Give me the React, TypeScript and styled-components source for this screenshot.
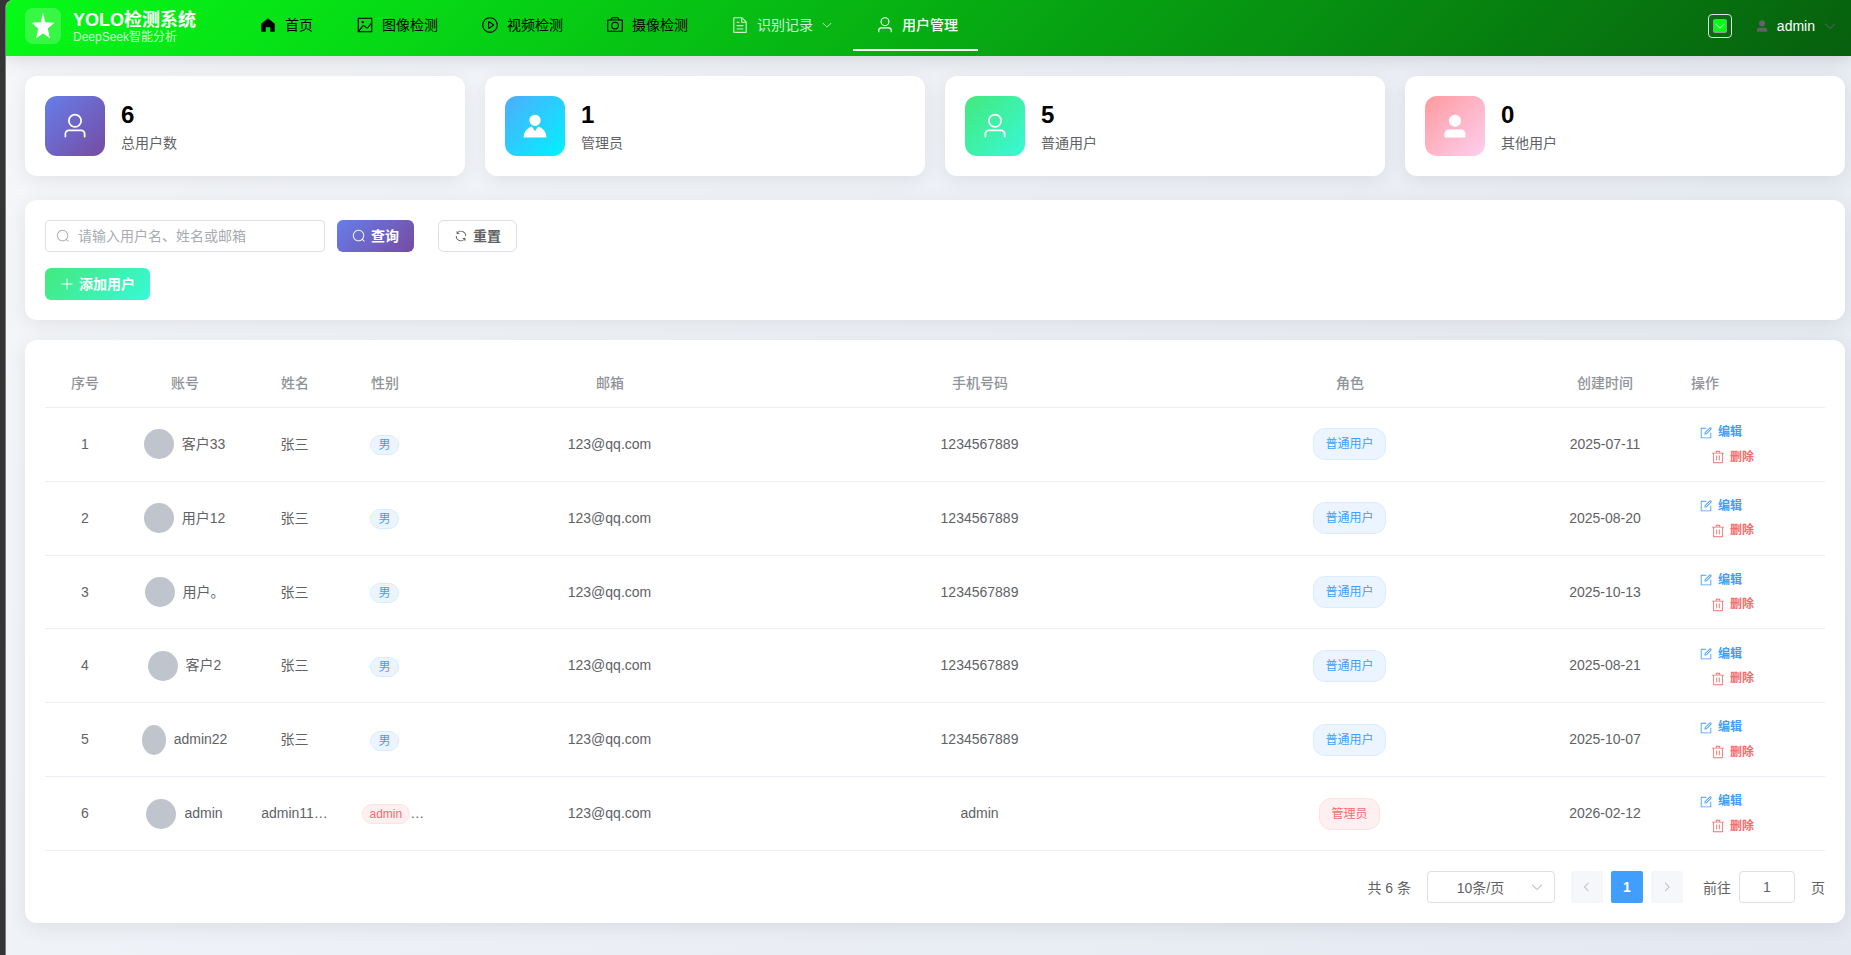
import React from "react";
import styled, { createGlobalStyle, css } from "styled-components";

const Global = createGlobalStyle`
  * { box-sizing: border-box; }
  body {
    margin: 0;
    background: #353535;
    font-family: "Liberation Sans", "Noto Sans CJK SC", sans-serif;
    font-size: 14px;
    color: #606266;
    overflow: hidden;
  }
`;

const paths = {
  user: "M512 512a192 192 0 1 0 0-384 192 192 0 0 0 0 384m0 64a256 256 0 1 1 0-512 256 256 0 0 1 0 512m320 320v-96a96 96 0 0 0-96-96H288a96 96 0 0 0-96 96v96a32 32 0 1 1-64 0v-96a160 160 0 0 1 160-160h448a160 160 0 0 1 160 160v96a32 32 0 1 1-64 0",
  userFilled:
    "M288 320a224 224 0 1 0 448 0 224 224 0 1 0-448 0m544 608H160a32 32 0 0 1-32-32v-96a160 160 0 0 1 160-160h448a160 160 0 0 1 160 160v96a32 32 0 0 1-32 32z",
  avatar:
    "M628.736 528.896A416 416 0 0 1 928 928H96a415.872 415.872 0 0 1 299.264-399.104L512 704zM720 304a208 208 0 1 1-416 0 208 208 0 0 1 416 0",
  home: "M512 128 128 447.936V896h255.936V640H640v256h255.936V447.936z",
  picture:
    "M160 160v704h704V160zm-32-64h768a32 32 0 0 1 32 32v768a32 32 0 0 1-32 32H128a32 32 0 0 1-32-32V128a32 32 0 0 1 32-32M384 288q64 0 64 64t-64 64q-64 0-64-64t64-64M185.408 876.992l-50.816-38.912L350.72 556.032a96 96 0 0 1 134.592-17.856l1.856 1.472 122.88 99.136a32 32 0 0 0 44.992-4.864l216-269.888 49.92 39.936-215.808 269.824-.256.32a96 96 0 0 1-135.04 14.464l-122.88-99.072-.64-.512a32 32 0 0 0-44.8 5.952z",
  video:
    "M512 64a448 448 0 1 1 0 896 448 448 0 0 1 0-896m0 832a384 384 0 0 0 0-768 384 384 0 0 0 0 768m-48-247.616L668.608 512 464 375.616zm10.624-342.656 249.472 166.336a48 48 0 0 1 0 79.872L474.624 718.272A48 48 0 0 1 400 678.336V345.6a48 48 0 0 1 74.624-39.936z",
  camera:
    "M896 256H128v576h768zm-199.424-64-32.064-64h-304.96l-32 64zM96 192h160l46.336-92.608A64 64 0 0 1 359.552 64h304.96a64 64 0 0 1 57.216 35.328L768.192 192H928a32 32 0 0 1 32 32v640a32 32 0 0 1-32 32H96a32 32 0 0 1-32-32V224a32 32 0 0 1 32-32m416 512a160 160 0 1 0 0-320 160 160 0 0 0 0 320m0 64a224 224 0 1 1 0-448 224 224 0 0 1 0 448",
  document:
    "M832 384H576V128H192v768h640zm-26.496-64L640 154.496V320zM160 64h480l256 256v608a32 32 0 0 1-32 32H160a32 32 0 0 1-32-32V96a32 32 0 0 1 32-32m160 448h384v64H320zm0-192h160v64H320zm0 384h384v64H320z",
  down: "M831.872 340.864 512 652.672 192.128 340.864a30.592 30.592 0 0 0-42.752 0 29.12 29.12 0 0 0 0 41.6L489.664 714.24a32 32 0 0 0 44.672 0l340.288-331.712a29.12 29.12 0 0 0 0-41.728 30.592 30.592 0 0 0-42.752 0z",
  left: "M609.408 149.376 277.76 489.6a32 32 0 0 0 0 44.672l331.648 340.352a29.12 29.12 0 0 0 41.728 0 30.592 30.592 0 0 0 0-42.752L339.264 511.936l311.872-319.872a30.592 30.592 0 0 0 0-42.688 29.12 29.12 0 0 0-41.728 0",
  right:
    "M340.864 149.312a30.592 30.592 0 0 0 0 42.752L652.736 512 340.864 831.872a30.592 30.592 0 0 0 0 42.752 29.12 29.12 0 0 0 41.728 0L714.24 534.336a32 32 0 0 0 0-44.672L382.592 149.376a29.12 29.12 0 0 0-41.728 0z",
  search:
    "m795.904 750.72 124.992 124.928a32 32 0 0 1-45.248 45.248L750.656 795.904a416 416 0 1 1 45.248-45.248M480 832a352 352 0 1 0 0-704 352 352 0 0 0 0 704",
  refresh:
    "M771.776 794.88A384 384 0 0 1 128 512h64a320 320 0 0 0 555.712 216.448H654.72a32 32 0 1 1 0-64h149.056a32 32 0 0 1 32 32v148.928a32 32 0 1 1-64 0v-50.56zM276.288 295.616h92.992a32 32 0 0 1 0 64H220.16a32 32 0 0 1-32-32V178.56a32 32 0 0 1 64 0v50.56A384 384 0 0 1 896.128 512h-64a320 320 0 0 0-555.776-216.384z",
  plus: "M480 480V128a32 32 0 0 1 64 0v352h352a32 32 0 1 1 0 64H544v352a32 32 0 1 1-64 0V544H128a32 32 0 0 1 0-64z",
  edit: "M832 512a32 32 0 1 1 64 0v352a32 32 0 0 1-32 32H160a32 32 0 0 1-32-32V160a32 32 0 0 1 32-32h352a32 32 0 0 1 0 64H192v640h640zM469.952 554.24l52.8-7.552L847.104 222.4a32 32 0 1 0-45.248-45.248L477.44 501.44l-7.552 52.8zm422.4-422.4a96 96 0 0 1 0 135.808l-331.84 331.84a32 32 0 0 1-18.112 9.088L436.8 623.68a32 32 0 0 1-36.224-36.224l15.104-105.6a32 32 0 0 1 9.024-18.112l331.904-331.84a96 96 0 0 1 135.744 0z",
  trash:
    "M160 256H96a32 32 0 0 1 0-64h256V95.936a32 32 0 0 1 32-32h256a32 32 0 0 1 32 32V192h256a32 32 0 1 1 0 64h-64v672a32 32 0 0 1-32 32H192a32 32 0 0 1-32-32zm448-64v-64H416v64zM224 896h576V256H224zm192-128a32 32 0 0 1-32-32V416a32 32 0 0 1 64 0v320a32 32 0 0 1-32 32m192 0a32 32 0 0 1-32-32V416a32 32 0 0 1 64 0v320a32 32 0 0 1-32 32",
};

type IconName = keyof typeof paths;

const Svg = styled.svg`
  display: block;
  flex: none;
  fill: currentColor;
`;

const Icon = ({ name, size }: { name: IconName; size: number }) => (
  <Svg width={size} height={size} viewBox="0 0 1024 1024">
    <path d={paths[name]} />
  </Svg>
);

const Page = styled.div`
  margin-left: 5px;
  height: 955px;
  display: flex;
  flex-direction: column;
  border-left: 1px solid #7c7c7e;
  border-top-left-radius: 8px;
  overflow: hidden;
  background: linear-gradient(135deg, #f5f7fa 0%, #e4e8f1 100%);
`;

const Header = styled.header`
  height: 56px;
  flex: none;
  display: flex;
  align-items: center;
  padding: 0 14px 4px 19px;
  background: linear-gradient(135deg, #06fb17 0%, #07600e 100%);
  box-shadow: 0 2px 20px rgba(0, 0, 0, 0.15);
`;

const LogoBox = styled.div`
  width: 36px;
  height: 36px;
  border-radius: 8px;
  background: rgba(255, 255, 255, 0.2);
  display: flex;
  align-items: center;
  justify-content: center;
`;

const Brand = styled.div`
  margin-left: 12px;
  width: 163px;
  padding-top: 2px;
`;
const BrandName = styled.div`
  font-size: 18px;
  line-height: 20px;
  font-weight: 700;
  color: #fff;
`;
const BrandSub = styled.div`
  font-size: 12px;
  line-height: 15px;
  color: rgba(255, 255, 255, 0.8);
`;

const Nav = styled.nav`
  display: flex;
  height: 52px;
  flex: 1;
`;
const NavItem = styled.a<{ $tone: "dark" | "soft" | "active" }>`
  display: flex;
  align-items: center;
  height: 51px;
  padding: 0 20px;
  border-bottom: 2px solid ${(p) => (p.$tone === "active" ? "#fff" : "transparent")};
  color: ${(p) => ({ dark: "#000", soft: "rgba(255,255,255,.8)", active: "#fff" })[p.$tone]};
  font-weight: ${(p) => (p.$tone === "active" ? 500 : 400)};
`;
const NavIcon = styled.span`
  width: 24px;
  margin-right: 5px;
  display: flex;
  justify-content: center;
`;
const NavLabel = styled.span`
  padding-bottom: 1px;
`;
const NavCaret = styled.span`
  margin-left: 8px;
`;

const Picker = styled.div`
  width: 24px;
  height: 24px;
  border: 1px solid #dcdfe6;
  border-radius: 4px;
  padding: 4px;
  margin-right: 23px;
`;
const PickerColor = styled.div`
  height: 14px;
  border: 1px solid #999;
  border-radius: 2px;
  background: #06fb17;
  color: #fff;
  display: flex;
  align-items: center;
  justify-content: center;
`;
const Account = styled.div`
  display: flex;
  align-items: center;
  color: #606266;
`;
const AccountName = styled.span`
  margin: 0 8px;
  color: #fff;
  font-weight: 500;
`;

const Main = styled.main`
  flex: 1;
  padding: 20px 6px 0 19px;
  display: flex;
  flex-direction: column;
`;

const panel = css`
  background: #fff;
  border-radius: 12px;
  box-shadow: 0 4px 20px rgba(0, 0, 0, 0.08);
`;

const Stats = styled.section`
  display: grid;
  grid-template-columns: repeat(4, 1fr);
  gap: 20px;
  margin-bottom: 24px;
`;
const StatCard = styled.div`
  ${panel}
  height: 100px;
  padding: 20px;
  display: flex;
  gap: 16px;
`;
const StatIcon = styled.div<{ $from: string; $to: string }>`
  width: 60px;
  height: 60px;
  border-radius: 12px;
  background: linear-gradient(135deg, ${(p) => p.$from} 0%, ${(p) => p.$to} 100%);
  color: #fff;
  display: flex;
  align-items: center;
  justify-content: center;
`;
const StatValue = styled.div`
  font-size: 24px;
  line-height: 28px;
  font-weight: 700;
  color: #000;
  margin-top: 5px;
`;
const StatLabel = styled.div`
  font-size: 14px;
  line-height: 20px;
  margin-top: 4px;
  color: #606266;
`;

const Filter = styled.section`
  ${panel}
  height: 120px;
  padding: 20px;
  margin-bottom: 20px;
`;
const FilterRow = styled.div`
  display: flex;
  margin-bottom: 16px;
`;
const SearchBox = styled.div`
  width: 280px;
  height: 32px;
  border: 1px solid #dcdfe6;
  border-radius: 4px;
  padding: 0 10px;
  display: flex;
  align-items: center;
  gap: 8px;
  color: #a8abb2;
  margin-right: 12px;
`;
const Label = styled.span`
  padding-bottom: 2px;
`;
const Button = styled.button<{ $kind: "primary" | "plain" | "success" }>`
  height: 32px;
  padding: 0 15px;
  border-radius: 6px;
  border: 0;
  display: inline-flex;
  align-items: center;
  gap: 5px;
  font: inherit;
  font-weight: 700;
  color: #fff;
  ${(p) =>
    p.$kind === "primary" &&
    css`
      background: linear-gradient(135deg, #667eea 0%, #764ba2 100%);
      margin-right: 24px;
    `}
  ${(p) =>
    p.$kind === "plain" &&
    css`
      background: #fff;
      border: 1px solid #dcdfe6;
      color: #606266;
    `}
  ${(p) =>
    p.$kind === "success" &&
    css`
      background: linear-gradient(135deg, #43e97b 0%, #38f9d7 100%);
    `}
`;

const TablePanel = styled.section`
  ${panel}
  height: 583px;
  padding: 20px;
`;
const Row = styled.div<{ $head?: boolean }>`
  display: grid;
  grid-template-columns: 80px 120px 100px 80px repeat(3, 1fr) 140px 150px;
  align-items: center;
  height: ${(p) => (p.$head ? "48px" : "73.83px")};
  border-bottom: 1px solid #ebeef5;
  ${(p) =>
    p.$head &&
    css`
      color: #909399;
      font-weight: 500;
    `}
`;
const Cell = styled.div<{ $left?: boolean; $inset?: boolean }>`
  min-width: 0;
  padding: 0 ${(p) => (p.$inset ? 12.5 : 12)}px 0 ${(p) => (p.$left ? 16 : p.$inset ? 11.5 : 12)}px;
  text-align: ${(p) => (p.$left ? "left" : "center")};
  white-space: nowrap;
  line-height: 23px;
`;
const Ellipsis = styled.div`
  overflow: hidden;
  text-overflow: ellipsis;
`;
const SexOverflow = styled.div`
  display: flex;
  align-items: center;
  padding-left: 5px;
`;
const UserCell = styled.div`
  display: flex;
  align-items: center;
  justify-content: center;
  gap: 8px;
`;
const AvatarDot = styled.span<{ $w: number }>`
  width: ${(p) => p.$w}px;
  height: 30px;
  flex: none;
  border-radius: 50%;
  background: #c0c4cc;
`;
const Tag = styled.span<{ $danger?: boolean; $large?: boolean }>`
  display: inline-flex;
  align-items: center;
  vertical-align: middle;
  font-size: 12px;
  line-height: 12px;
  height: ${(p) => (p.$large ? 32 : 20)}px;
  padding: 0 ${(p) => (p.$large ? 11 : 7)}px;
  border-radius: 12px;
  border: 1px solid ${(p) => (p.$danger ? "#fde2e2" : "#d9ecff")};
  background: ${(p) => (p.$danger ? "#fef0f0" : "#ecf5ff")};
  color: ${(p) => (p.$danger ? "#f56c6c" : "#409eff")};
`;
const Actions = styled.div`
  padding-top: 1px;
`;
const Action = styled.div<{ $danger?: boolean }>`
  display: flex;
  align-items: center;
  gap: 5px;
  height: 24.5px;
  font-size: 12px;
  font-weight: 700;
  padding-left: ${(p) => (p.$danger ? 20 : 8)}px;
  color: ${(p) => (p.$danger ? "#f56c6c" : "#409eff")};
`;

const Pager = styled.div`
  display: flex;
  align-items: center;
  justify-content: flex-end;
  height: 32px;
  margin-top: 20px;
`;
const Total = styled.span`
  margin-right: 16px;
`;
const Field = styled.div<{ $w: number }>`
  width: ${(p) => p.$w}px;
  height: 32px;
  border: 1px solid #dcdfe6;
  border-radius: 4px;
  display: flex;
  align-items: center;
  justify-content: center;
`;
const SizeText = styled.span`
  flex: 1;
  text-align: center;
  padding-left: 3px;
`;
const SizeCaret = styled.span`
  color: #a8abb2;
  margin-right: 10px;
`;
const PageButtons = styled.div`
  display: flex;
  gap: 8px;
  margin: 0 20px 0 16px;
`;
const PageButton = styled.div<{ $active?: boolean }>`
  width: 32px;
  height: 32px;
  border-radius: 2px;
  display: flex;
  align-items: center;
  justify-content: center;
  font-weight: 700;
  background: ${(p) => (p.$active ? "#409eff" : "#f5f7fa")};
  color: ${(p) => (p.$active ? "#fff" : "#a8abb2")};
`;
const Goto = styled.span`
  margin-right: 8px;
`;
const GotoUnit = styled.span`
  margin-left: 16px;
`;

const nav: { icon: IconName; label: string; tone: "dark" | "soft" | "active"; caret?: boolean }[] = [
  { icon: "home", label: "首页", tone: "dark" },
  { icon: "picture", label: "图像检测", tone: "dark" },
  { icon: "video", label: "视频检测", tone: "dark" },
  { icon: "camera", label: "摄像检测", tone: "dark" },
  { icon: "document", label: "识别记录", tone: "soft", caret: true },
  { icon: "user", label: "用户管理", tone: "active" },
];

const stats: { icon: IconName; value: number; label: string; from: string; to: string }[] = [
  { icon: "user", value: 6, label: "总用户数", from: "#667eea", to: "#764ba2" },
  { icon: "avatar", value: 1, label: "管理员", from: "#4facfe", to: "#00f2fe" },
  { icon: "user", value: 5, label: "普通用户", from: "#43e97b", to: "#38f9d7" },
  { icon: "userFilled", value: 0, label: "其他用户", from: "#ff9a9e", to: "#fecfef" },
];

const rows = [
  { account: "客户33", w: 30, name: "张三", sex: "男", phone: "1234567889", role: "普通用户", date: "2025-07-11" },
  { account: "用户12", w: 30, name: "张三", sex: "男", phone: "1234567889", role: "普通用户", date: "2025-08-20" },
  { account: "用户。", w: 30, name: "张三", sex: "男", phone: "1234567889", role: "普通用户", date: "2025-10-13" },
  { account: "客户2", w: 30, name: "张三", sex: "男", phone: "1234567889", role: "普通用户", date: "2025-08-21" },
  { account: "admin22", w: 24, name: "张三", sex: "男", phone: "1234567889", role: "普通用户", date: "2025-10-07" },
  { account: "admin", w: 30, name: "admin11…", sex: "admin", phone: "admin", role: "管理员", date: "2026-02-12" },
];

const heads = ["序号", "账号", "姓名", "性别", "邮箱", "手机号码", "角色", "创建时间"];

export default function App() {
  return (
    <>
      <Global />
      <Page>
        <Header>
          <LogoBox>
            <Svg width="24" height="28" viewBox="0 0 24 28">
              <path d="M12 0.5 14.2 10.2 23.7 10.8 16.8 16.6 18.9 26.2 12 21.4 5.1 26.2 7.2 16.6 0.3 10.8 9.8 10.2Z" fill="#fff" />
            </Svg>
          </LogoBox>
          <Brand>
            <BrandName>YOLO检测系统</BrandName>
            <BrandSub>DeepSeek智能分析</BrandSub>
          </Brand>
          <Nav>
            {nav.map((n) => (
              <NavItem key={n.label} $tone={n.tone}>
                <NavIcon>
                  <Icon name={n.icon} size={18} />
                </NavIcon>
                <NavLabel>{n.label}</NavLabel>
                {n.caret && (
                  <NavCaret>
                    <Icon name="down" size={12} />
                  </NavCaret>
                )}
              </NavItem>
            ))}
          </Nav>
          <Picker>
            <PickerColor>
              <Icon name="down" size={12} />
            </PickerColor>
          </Picker>
          <Account>
            <Icon name="userFilled" size={14} />
            <AccountName>admin</AccountName>
            <Icon name="down" size={14} />
          </Account>
        </Header>
        <Main>
          <Stats>
            {stats.map((s) => (
              <StatCard key={s.label}>
                <StatIcon $from={s.from} $to={s.to}>
                  <Icon name={s.icon} size={28} />
                </StatIcon>
                <div>
                  <StatValue>{s.value}</StatValue>
                  <StatLabel>{s.label}</StatLabel>
                </div>
              </StatCard>
            ))}
          </Stats>
          <Filter>
            <FilterRow>
              <SearchBox>
                <Icon name="search" size={14} />
                <Label>请输入用户名、姓名或邮箱</Label>
              </SearchBox>
              <Button $kind="primary">
                <Icon name="search" size={14} />
                <Label>查询</Label>
              </Button>
              <Button $kind="plain">
                <Icon name="refresh" size={14} />
                <Label>重置</Label>
              </Button>
            </FilterRow>
            <Button $kind="success">
              <Icon name="plus" size={14} />
              <Label>添加用户</Label>
            </Button>
          </Filter>
          <TablePanel>
            <Row $head>
              {heads.map((h) => (
                <Cell key={h}>{h}</Cell>
              ))}
              <Cell $left>操作</Cell>
            </Row>
            {rows.map((r, i) => (
              <Row key={r.account}>
                <Cell>{i + 1}</Cell>
                <Cell $inset>
                  <UserCell>
                    <AvatarDot $w={r.w} />
                    {r.account}
                  </UserCell>
                </Cell>
                <Cell $inset>
                  <Ellipsis>{r.name}</Ellipsis>
                </Cell>
                <Cell $inset>
                  {r.sex === "admin" ? (
                    <SexOverflow>
                      <Tag $danger>{r.sex}</Tag>…
                    </SexOverflow>
                  ) : (
                    <Tag>{r.sex}</Tag>
                  )}
                </Cell>
                <Cell $inset>123@qq.com</Cell>
                <Cell $inset>{r.phone}</Cell>
                <Cell $inset>
                  <Tag $large $danger={r.role === "管理员"}>
                    {r.role}
                  </Tag>
                </Cell>
                <Cell>{r.date}</Cell>
                <Cell $left>
                  <Actions>
                    <Action>
                      <Icon name="edit" size={14} />
                      编辑
                    </Action>
                    <Action $danger>
                      <Icon name="trash" size={14} />
                      删除
                    </Action>
                  </Actions>
                </Cell>
              </Row>
            ))}
            <Pager>
              <Total>共 6 条</Total>
              <Field $w={128}>
                <SizeText>10条/页</SizeText>
                <SizeCaret>
                  <Icon name="down" size={14} />
                </SizeCaret>
              </Field>
              <PageButtons>
                <PageButton>
                  <Icon name="left" size={12} />
                </PageButton>
                <PageButton $active>1</PageButton>
                <PageButton>
                  <Icon name="right" size={12} />
                </PageButton>
              </PageButtons>
              <Goto>前往</Goto>
              <Field $w={56}>1</Field>
              <GotoUnit>页</GotoUnit>
            </Pager>
          </TablePanel>
        </Main>
      </Page>
    </>
  );
}
